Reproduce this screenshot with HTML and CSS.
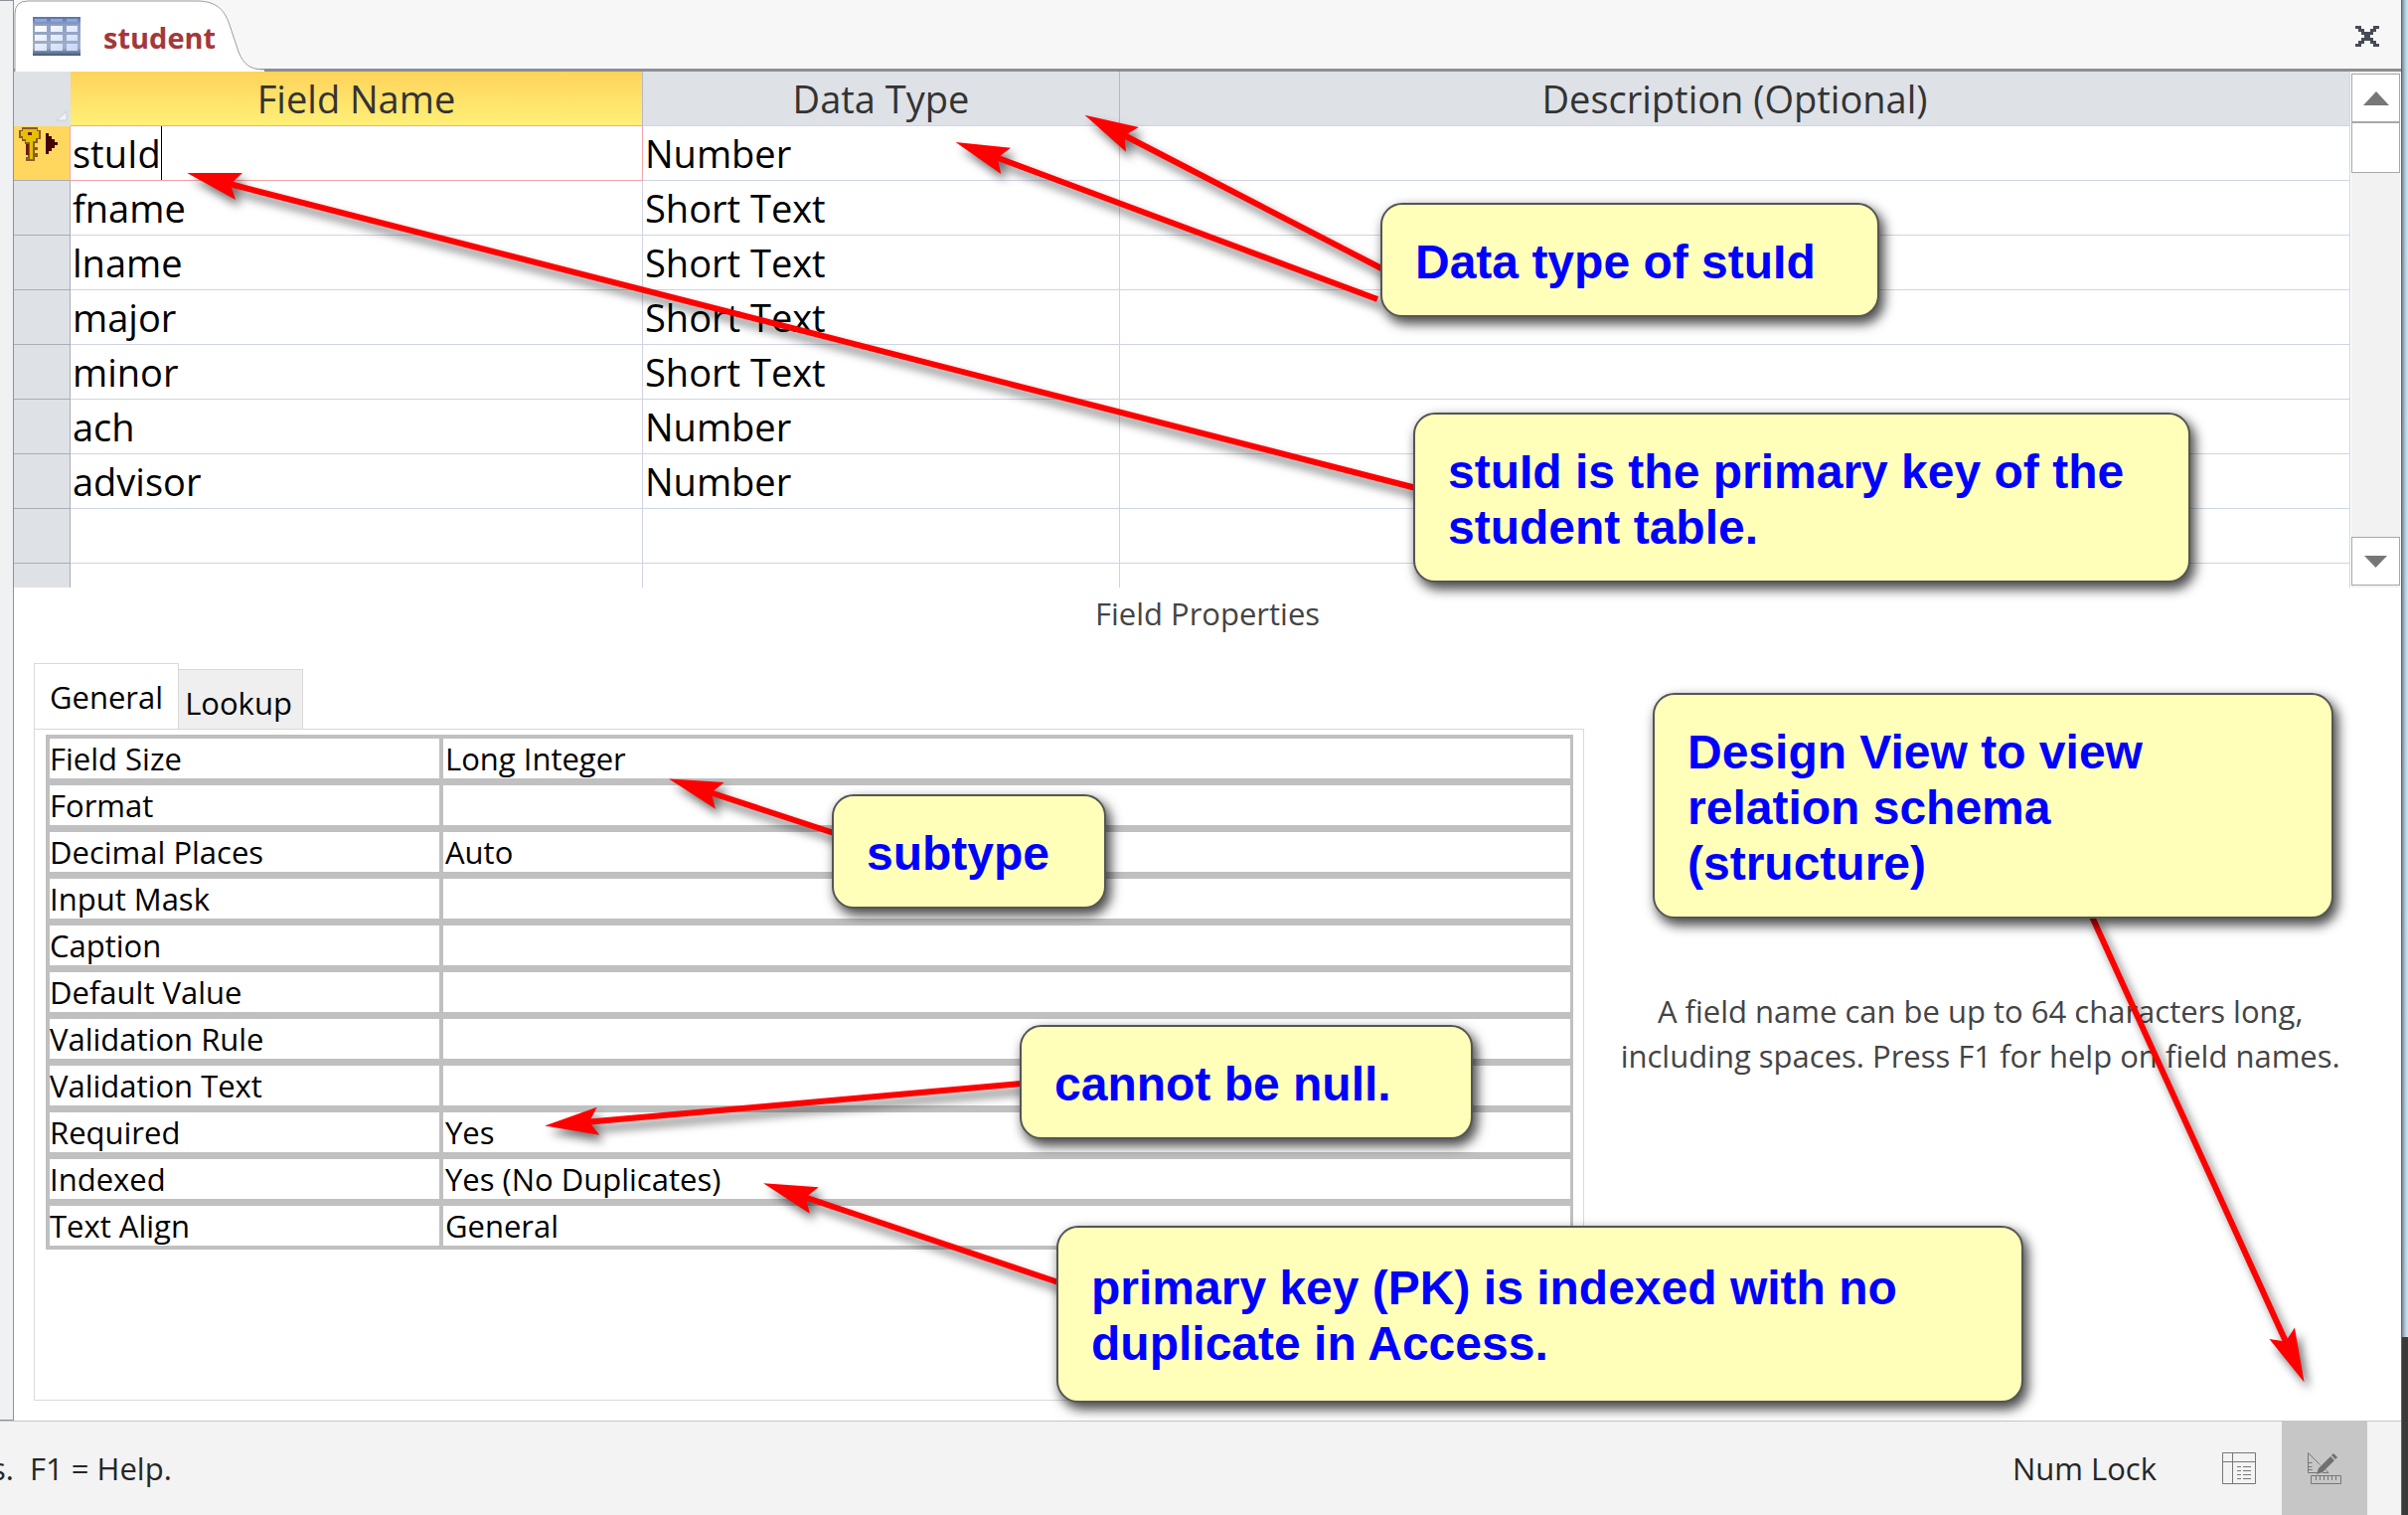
FILE: index.html
```html
<!DOCTYPE html>
<html lang="en">
<head>
<meta charset="utf-8">
<title>student</title>
<link rel="stylesheet" href="styles.css">
</head>
<body>
<div class="app">
  <div class="workspace">
    <div class="gutter"></div>
    <main class="document">
      <header class="titlebar">
        <div class="doc-tab">
          <svg class="tab-shape" viewBox="0 0 260 72" aria-hidden="true">
            <path class="tab-fill" d="M1 72V14Q1 1 14 1H184C206 1 213 12 218 28L226 52C231 65 238 70 252 70V72Z"/>
            <path class="tab-line" d="M1 72V14Q1 1 14 1H184C206 1 213 12 218 28L226 52C231 65 238 70 252 70"/>
          </svg>
          <svg class="table-icon" viewBox="0 0 48 39" aria-hidden="true">
            <defs>
              <linearGradient id="frame" x1="0" y1="0" x2="0" y2="1"><stop offset="0" stop-color="#5472ae"/><stop offset=".2" stop-color="#8d9fc4"/><stop offset=".8" stop-color="#a3afc6"/><stop offset="1" stop-color="#40577c"/></linearGradient>
              <linearGradient id="cell" x1="0" y1="0" x2="1" y2="1"><stop offset="0" stop-color="#fff"/><stop offset="1" stop-color="#c4d5fb"/></linearGradient>
            </defs>
            <path fill="url(#frame)" d="M0 0h48v39H0z"/>
            <path fill="#8ea6d6" d="M2 2h12v3H2zM18 2h12v3H18zM34 2h11v3H34z"/>
            <path fill="url(#cell)" d="M2 9h12v6H2zM18 9h12v6H18zM34 9h11v6H34zM2 18h12v6H2zM18 18h12v6H18zM34 18h11v6H34zM2 27h12v7H2zM18 27h12v7H18zM34 27h11v7H34z"/>
          </svg>
          <span class="doc-name">student</span>
        </div>
        <button class="close" aria-label="Close">
          <svg viewBox="0 0 24 21" shape-rendering="crispEdges"><path fill="#474b54" d="M0 0h6v3h3v3h6V3h3V0h6v3h-3v3h-3v3h-3v3h3v3h3v3h3v3h-6v-3h-3v-3H9v3H6v3H0v-3h3v-3h3v-3h3V9H6V6H3V3H0z"/></svg>
        </button>
      </header>

      <section class="sheet">
        <table class="fields">
          <colgroup><col class="c-sel"><col class="c-name"><col class="c-type"><col></colgroup>
          <thead>
            <tr><th class="corner"><svg viewBox="0 0 12 11" aria-hidden="true"><path fill="#eef2f6" stroke="#c6d3de" d="M11 1v9H1z"/></svg></th><th class="current">Field Name</th><th>Data Type</th><th>Description (Optional)</th></tr>
          </thead>
          <tbody>
            <tr class="active"><th><svg class="key-icon" viewBox="0 0 42 34" aria-hidden="true">
              <path fill="#8c5a22" d="M3 0h16v3h3v9h-3v4h-3v4h3v3h-3v3h3v4h-3v4H7v-4h2V17H6v-3H3V11H0V3h3z"/>
              <path fill="#e5c000" d="M4 2h14v2h2v7h-3v3h-3v18h-3V15H7v-3H4V9H2V4h2z"/>
              <path fill="#6d1b12" d="M9 5h4v3H9zM7 17h3v11H7z"/>
              <path fill="#450000" d="M27 6h3v3h3v3h3v3h3v3h-3v3h-3v3h-3v3h-3z"/>
            </svg></th><td class="editing"><span class="caret">stuId</span></td><td>Number</td><td></td></tr>
            <tr><th></th><td>fname</td><td>Short Text</td><td></td></tr>
            <tr><th></th><td>lname</td><td>Short Text</td><td></td></tr>
            <tr><th></th><td>major</td><td>Short Text</td><td></td></tr>
            <tr><th></th><td>minor</td><td>Short Text</td><td></td></tr>
            <tr><th></th><td>ach</td><td>Number</td><td></td></tr>
            <tr><th></th><td>advisor</td><td>Number</td><td></td></tr>
            <tr><th></th><td></td><td></td><td></td></tr>
            <tr class="partial"><th></th><td></td><td></td><td></td></tr>
          </tbody>
        </table>
        <div class="scrollbar">
          <button class="scroll-btn" aria-label="Scroll up"><svg viewBox="0 0 26 14"><path fill="#777" d="M13 0l13 14H0z"/></svg></button>
          <div class="thumb"></div>
          <button class="scroll-btn down" aria-label="Scroll down"><svg viewBox="0 0 26 14"><path fill="#777" d="M1 1h23L12.500 13z"/></svg></button>
        </div>
      </section>

      <h2 class="section-title">Field Properties</h2>

      <section class="properties">
        <div class="prop-pane">
          <div class="tabs" role="tablist">
            <button class="tab selected" role="tab" aria-selected="true">General</button>
            <button class="tab" role="tab" aria-selected="false">Lookup</button>
          </div>
          <div class="panel" role="tabpanel">
            <table class="props">
              <tbody>
                <tr><th>Field Size</th><td>Long Integer</td></tr>
                <tr><th>Format</th><td></td></tr>
                <tr><th>Decimal Places</th><td>Auto</td></tr>
                <tr><th>Input Mask</th><td></td></tr>
                <tr><th>Caption</th><td></td></tr>
                <tr><th>Default Value</th><td></td></tr>
                <tr><th>Validation Rule</th><td></td></tr>
                <tr><th>Validation Text</th><td></td></tr>
                <tr><th>Required</th><td>Yes</td></tr>
                <tr><th>Indexed</th><td>Yes (No Duplicates)</td></tr>
                <tr><th>Text Align</th><td>General</td></tr>
              </tbody>
            </table>
          </div>
        </div>
        <aside class="hint">A field name can be up to 64 characters long,<br>including spaces. Press F1 for help on field names.</aside>
      </section>
    </main>
  </div>

  <footer class="statusbar">
    <span class="status-text">s.&nbsp; F1 = Help.</span>
    <span class="num-lock">Num Lock</span>
    <button class="view-btn" aria-label="Datasheet View">
      <svg viewBox="0 0 34 32" fill="none" stroke="#777"><path d="M.5.5h33v31H.5zM.5 9.500h33M10.500 .5v31M15 14.500h4M21 14.500h8M15 18.500h4M21 18.500h8M15 22.500h4M21 22.500h8M15 26.500h4M21 26.500h8"/></svg>
    </button>
    <button class="view-btn on" aria-label="Design View">
      <svg viewBox="0 0 34 32" fill="none" stroke="#777"><path d="M.5 20.500V.5l12 12M.5 20.500h9M15 20.500h6l-3-3M.5 10.500h4M.5 14.500h4M.5 17.500h4M3.500 23.500h30v8h-30zM8.500 24v4M12.500 24v4M16.500 24v4M20.500 24v4M24.500 24v4M28.500 24v4"/><path fill="#707070" stroke="none" d="M9 22l2-6L23 4l4 4-12 12zM24 3l2-2 4 4-2 2z"/></svg>
    </button>
  </footer>

  <svg class="arrows" aria-hidden="true">
    <defs>
      <marker id="head" markerUnits="userSpaceOnUse" markerWidth="60" markerHeight="32" viewBox="0 -16 60 32" refX="40" refY="0" orient="auto"><path fill="#f00" d="M0 0L54 -14L45 0L54 14Z"/></marker>
    </defs>
    <g class="arrow">
      <path d="M227 184L1425 491"/>
      <path d="M999 157L1386 301"/>
      <path d="M1127 134L1392 271"/>
      <path d="M711 796L839 838"/>
      <path d="M588 1129L1028 1090"/>
      <path d="M806 1203L1065 1290"/>
      <path d="M2302 1354L2105 922"/>
    </g>
  </svg>
  <div class="note n-type">Data type of stuId</div>
  <div class="note n-key">stuId is the primary key of the<br>student table.</div>
  <div class="note n-design">Design View to view<br>relation schema<br>(structure)</div>
  <div class="note n-sub">subtype</div>
  <div class="note n-null">cannot be null.</div>
  <div class="note n-index">primary key (PK) is indexed with no<br>duplicate in Access.</div>
</div>
<div class="desktop"></div>
</body>
</html>
```
FILE: styles.css
```css
* { box-sizing: border-box; }
body {
  margin: 0;
  min-height: 100vh;
  display: flex;
  font: 31px/40px "Open Sans", "Noto Sans", sans-serif;
  color: #000;
  background: #fff;
}
button { font: inherit; color: inherit; border: 0; padding: 0; margin: 0; background: none; }
svg { display: block; }
table { border-collapse: separate; border-spacing: 0; table-layout: fixed; width: 100%; }
th { font-weight: 400; }
th, td { padding: 0; }

.app {
  position: relative;
  flex: 1;
  min-width: 0;
  display: flex;
  flex-direction: column;
  overflow: hidden;
  border-right: 1px solid #a94442;
}
.desktop {
  width: 6px;
  background:
    linear-gradient(#3a3a3a, #3a3a3a) 0 1345px / 100% 100% no-repeat,
    linear-gradient(90deg, #76899b, #b9d0de 60%, #cfe6f1);
}
.workspace { flex: 1; display: flex; }
.gutter {
  width: 14px;
  background: #eff1f3;
  border: 1px solid #8f929b;
  border-left: 0;
}
.document { flex: 1; min-width: 0; display: flex; flex-direction: column; }

/* Title bar */
.titlebar {
  height: 72px;
  display: flex;
  justify-content: space-between;
  background: #f7f7f7;
  border-bottom: 3px solid #8b8f92;
}
.doc-tab {
  position: relative;
  width: 260px;
  height: 72px;
  display: flex;
  align-items: center;
  gap: 23px;
  padding-left: 19px;
}
.tab-shape { position: absolute; left: 0; top: 0; width: 260px; height: 72px; }
.tab-fill { fill: #fff; }
.tab-line { fill: none; stroke: #a39d95; stroke-width: 1; }
.table-icon { position: relative; width: 48px; height: 39px; }
.doc-name { position: relative; font-size: 29px; font-weight: 700; color: #a4373a; padding-top: 4px; }
.close { width: 72px; height: 72px; padding-left: 26px; }
.close svg { width: 24px; height: 21px; }

/* Field grid */
.sheet { display: flex; }
.fields { flex: 1; min-width: 0; font-size: 38px; line-height: 54px; border-right: 1px solid #cfd7e6; }
.c-sel { width: 57px; }
.c-name { width: 576px; }
.c-type { width: 480px; }
.fields th, .fields td { height: 55px; border-bottom: 1px solid #cfd5e6; border-right: 1px solid #d0d3e4; white-space: nowrap; }
.fields th:last-child, .fields td:last-child { border-right: 0; }
.fields td { padding-left: 2px; }
.fields thead th { background: #dee1e6; color: #333; border-right-color: #b4b9c4; }
.fields thead .corner { border-color: #dee1e6; vertical-align: bottom; padding: 0 0 4px 42px; }
.corner svg { width: 12px; height: 11px; }
.fields thead .current { background: linear-gradient(#ffd35b, #fff077); border-bottom-color: #f5a3a8; }
.fields tbody th { background: #dee1e6; border-color: #a9adb5; }
.fields .active th { background: #ffd75f; vertical-align: top; padding: 1px 0 0 5px; border-right-color: #f5a3a8; }
.fields .editing { border-color: #f5a3a8; }
.caret { display: inline-block; border-right: 1px solid #000; }
.key-icon { width: 42px; height: 34px; }
.fields .partial th, .fields .partial td { height: 24px; border-bottom: 0; }

.scrollbar { flex: none; width: 51px; padding: 2px 1px; display: flex; flex-direction: column; background: linear-gradient(#f2f2f2, #f2f2f2) 1px 0 / 49px 100% no-repeat; }
.scroll-btn, .thumb { height: 49px; background: #fff; border: 1px solid #a8a8a8; }
.scroll-btn svg { width: 26px; height: 14px; margin: 0 auto; }
.thumb { height: 51px; }
.down { margin-top: auto; }

/* Lower pane */
.section-title { margin: 0 0 24px; font-size: 31px; line-height: 52px; font-weight: 400; text-align: center; color: #444; }
.properties { flex: 1; display: flex; padding: 0 25px 20px 20px; }
.prop-pane { flex: 0 0 66.2%; display: flex; flex-direction: column; }
.tabs { display: flex; align-items: flex-end; margin-bottom: -1px; }
.tab { width: 125px; height: 61px; padding: 6px 4px 0 0; background: #efefef; border: 1px solid #d9d9d9; border-left: 0; }
.tab.selected { width: 146px; height: 67px; padding: 0; background: #fff; border: 1px solid #d9d9d9; border-bottom-color: #fff; }
.panel { flex: 1; padding: 5px 10px 0 11px; border: 1px solid #d9d9d9; }
.props { border: 4px solid #c0c0c0; border-width: 4px 3px 4px 4px; }
.props th { width: 396px; text-align: left; border-right: 4px solid #c0c0c0; }
.props td { padding-left: 2px; }
.props th, .props td { height: 47px; border-bottom: 7px solid #c0c0c0; }
.props tr:last-child th, .props tr:last-child td { height: 40px; border-bottom: 0; }
.hint { flex: 1; padding-top: 328px; line-height: 45px; text-align: center; color: #444; white-space: nowrap; }

/* Status bar */
.statusbar { height: 95px; display: flex; align-items: center; background: #f3f3f3; border-top: 1px solid #c6c6c6; color: #262626; padding-right: 34px; }
.status-text { margin-left: -9px; flex: 1; white-space: nowrap; }
.num-lock { margin-right: 40px; }
.view-btn { width: 86px; height: 100%; display: grid; place-items: center; }
.view-btn svg { width: 34px; height: 32px; }
.view-btn.on { background: #c6c6c6; }

/* Annotations drawn over the window */
.arrows { position: absolute; left: 0; top: 0; width: 100%; height: 100%; pointer-events: none; }
.arrow { filter: drop-shadow(5px 7px 5px rgba(0, 0, 0, .55)); }
.arrow path { fill: none; stroke: #f00; stroke-width: 6; marker-start: url(#head); }
.note {
  position: absolute;
  display: flex;
  align-items: center;
  padding: 4px 0 0 33px;
  border: 2px solid #555;
  border-radius: 22px;
  background: #ffffb9;
  box-shadow: 4px 6px 12px 1px rgba(0, 0, 0, .7);
  color: #00f;
  font: bold 48px/56px "Liberation Sans", Arial, sans-serif;
  white-space: nowrap;
}
.n-type { left: 1389px; top: 204px; width: 502px; height: 115px; }
.n-key { left: 1422px; top: 415px; width: 782px; height: 171px; }
.n-design { left: 1663px; top: 697px; width: 685px; height: 227px; }
.n-sub { left: 837px; top: 799px; width: 276px; height: 115px; }
.n-null { left: 1026px; top: 1031px; width: 456px; height: 115px; }
.n-index { left: 1063px; top: 1233px; width: 973px; height: 178px; }
```
